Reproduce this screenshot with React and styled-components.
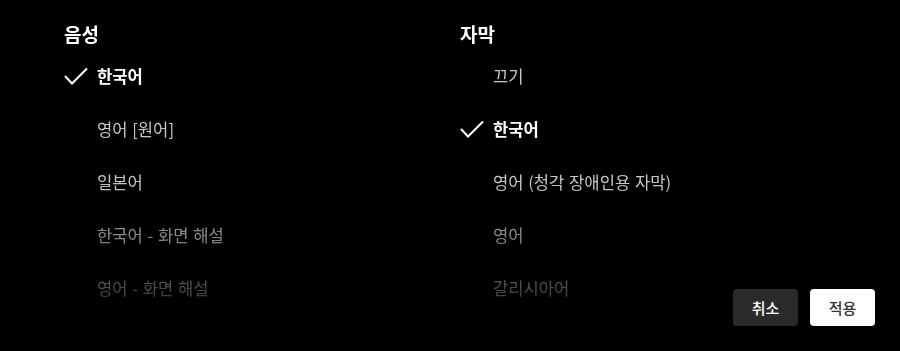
import React, { useState } from 'react';
import styled, { createGlobalStyle } from 'styled-components';

const GlobalStyle = createGlobalStyle`
  html, body {
    margin: 0;
    padding: 0;
    background: #000;
  }
  body {
    font-family: "Noto Sans CJK KR", "Noto Sans", sans-serif;
    color: #fff;
  }
`;

const Panel = styled.div`
  position: relative;
  height: 100vh;
  min-height: 351px;
  box-sizing: border-box;
  background: #000;
  overflow: hidden;
`;

const Columns = styled.div`
  display: grid;
  grid-template-columns: 396px 1fr;
  padding: 21px 0 0 64px;
  height: 100%;
  box-sizing: border-box;
  -webkit-mask-image: linear-gradient(to bottom, #000 180px, transparent 351px);
  mask-image: linear-gradient(to bottom, #000 180px, transparent 351px);
`;

const Column = styled.section`
  display: flex;
  flex-direction: column;
`;

const Heading = styled.h2`
  margin: 0;
  font-size: 19px;
  line-height: 26px;
  font-weight: 700;
  color: #fff;
`;

const OptionList = styled.ul`
  list-style: none;
  margin: 2px 0 0;
  padding: 0;
`;

const Option = styled.li`
  display: flex;
  align-items: center;
  height: 53px;
  font-size: 16.6px;
  word-spacing: 1px;
  font-weight: ${(p) => (p.selected ? 700 : 400)};
  color: ${(p) => (p.selected ? '#fff' : '#c8c8c8')};
  cursor: pointer;
  white-space: nowrap;
`;

const CheckSlot = styled.span`
  display: inline-flex;
  align-items: center;
  width: 33px;
  flex-shrink: 0;
`;

const Footer = styled.div`
  position: absolute;
  right: 25px;
  bottom: 25px;
  display: flex;
  gap: 12px;
`;

const Button = styled.button`
  width: 65px;
  height: 37px;
  border: none;
  border-radius: 4px;
  font-family: inherit;
  font-size: 15px;
  font-weight: 500;
  background: ${(p) => (p.primary ? '#fff' : '#2a2a2a')};
  color: ${(p) => (p.primary ? '#333' : '#fff')};
  cursor: pointer;
  padding: 0;
`;

const Check = () => (
  <svg width="24" height="18" viewBox="0 0 24 18" fill="none">
    <polyline points="1,9 8,16.5 23,1.5" stroke="#fff" strokeWidth="2" />
  </svg>
);

const audio = ['한국어', '영어 [원어]', '일본어', '한국어 - 화면 해설', '영어 - 화면 해설'];
const subtitles = ['끄기', '한국어', '영어 (청각 장애인용 자막)', '영어', '갈리시아어'];

const OptionColumn = ({ title, options, selected, onSelect }) => (
  <Column>
    <Heading>{title}</Heading>
    <OptionList>
      {options.map((label, i) => (
        <Option key={label} selected={i === selected} onClick={() => onSelect(i)}>
          <CheckSlot>{i === selected && <Check />}</CheckSlot>
          {label}
        </Option>
      ))}
    </OptionList>
  </Column>
);

export default function App() {
  const [audioIdx, setAudioIdx] = useState(0);
  const [subIdx, setSubIdx] = useState(1);

  return (
    <Panel>
      <GlobalStyle />
      <Columns>
        <OptionColumn title="음성" options={audio} selected={audioIdx} onSelect={setAudioIdx} />
        <OptionColumn title="자막" options={subtitles} selected={subIdx} onSelect={setSubIdx} />
      </Columns>
      <Footer>
        <Button>취소</Button>
        <Button primary>적용</Button>
      </Footer>
    </Panel>
  );
}
